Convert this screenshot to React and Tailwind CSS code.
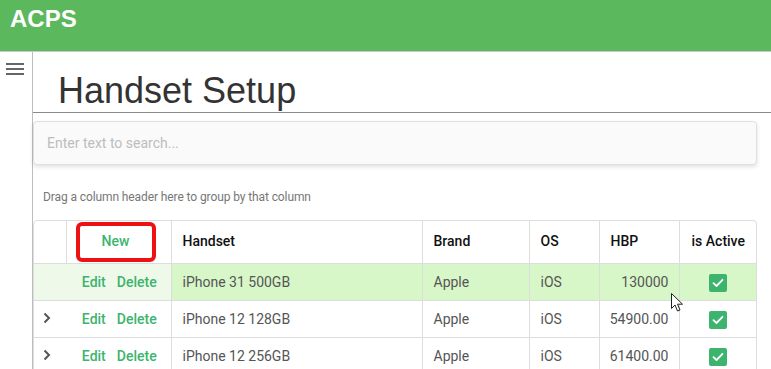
import React from "react";

const rows = [
  { name: "iPhone 31 500GB", brand: "Apple", os: "iOS", hbp: "130000", sel: true },
  { name: "iPhone 12 128GB", brand: "Apple", os: "iOS", hbp: "54900.00" },
  { name: "iPhone 12 256GB", brand: "Apple", os: "iOS", hbp: "61400.00" },
];

function Check() {
  return (
    <span className="inline-flex w-[18px] h-[18px] rounded-[2px] bg-[#3cb46e] items-center justify-center align-middle">
      <svg width="12" height="10" viewBox="0 0 12 10" fill="none">
        <path d="M1.5 5.2 L4.5 8 L10.5 1.8" stroke="white" strokeWidth="1.8" strokeLinecap="round" strokeLinejoin="round" />
      </svg>
    </span>
  );
}

function Chevron() {
  return (
    <svg width="8" height="12" viewBox="0 0 8 12" fill="none">
      <path d="M1.5 1.5 L6 6 L1.5 10.5" stroke="#555" strokeWidth="2" />
    </svg>
  );
}

export default function App() {
  return (
    <div className="w-[771px] h-[369px] overflow-hidden bg-white relative font-['Roboto',sans-serif]">
      <div className="h-[52px] bg-[#5cb85c] border-b border-[#c8c8c8] pl-[10px] pt-[4px]">
        <span className="text-white font-bold text-[24px] leading-[30px] font-['Liberation_Sans',Arial,sans-serif]">ACPS</span>
      </div>
      <div className="flex h-[317px]">
        <div className="w-[33px] shrink-0 border-r border-[#bdbdbd] pt-[11px] pl-[6px]">
          <div className="flex flex-col gap-[3px]">
            <div className="w-[18px] h-[2px] bg-[#666]" />
            <div className="w-[18px] h-[2px] bg-[#666]" />
            <div className="w-[18px] h-[2px] bg-[#666]" />
          </div>
        </div>
        <div className="flex-1 min-w-0">
          <div className="h-[61px] border-b border-[#8a8a8a] pl-[25px] pt-[19px]">
            <h1 className="text-[36px] leading-[40px] text-[#333] font-['Liberation_Sans',Arial,sans-serif]">Handset Setup</h1>
          </div>
          <div className="mr-[14px] mt-[8px] h-[44px] rounded-[4px] border border-[#e0e0e0] bg-[#fafafa] shadow-[0_2px_4px_rgba(0,0,0,0.12)] flex items-center pl-[13px]">
            <span className="text-[14px] text-[#bdbdbd]">Enter text to search...</span>
          </div>
          <div className="h-[55px] pl-[10px] pt-[25px] text-[12px] leading-[14px] text-[#777] tracking-[-0.1px]">
            Drag a column header here to group by that column
          </div>
          <div className="w-[724px] border border-[#ddd] rounded-[4px] overflow-hidden">
            <table className="table-fixed border-collapse w-full text-[14px]">
              <colgroup>
                <col className="w-[32px]" />
                <col className="w-[105px]" />
                <col className="w-[251px]" />
                <col className="w-[107px]" />
                <col className="w-[70px]" />
                <col className="w-[80px]" />
                <col className="w-[78px]" />
              </colgroup>
              <thead>
                <tr className="h-[42px] text-[#111] font-medium">
                  <th className="border-r border-b border-[#ddd]"></th>
                  <th className="border-r border-b border-[#ddd] p-0">
                    <div className="ml-[9px] w-[80px] h-[40px] rounded-[6px] border-[4px] border-[#ee1111] flex items-center justify-center text-[#3cb46e] font-medium">
                      New
                    </div>
                  </th>
                  <th className="border-r border-b border-[#ddd] text-left pl-[11px] font-medium">Handset</th>
                  <th className="border-r border-b border-[#ddd] text-left pl-[11px] font-medium">Brand</th>
                  <th className="border-r border-b border-[#ddd] text-left pl-[11px] font-medium">OS</th>
                  <th className="border-r border-b border-[#ddd] text-left pl-[11px] font-medium">HBP</th>
                  <th className="border-b border-[#ddd] text-center font-medium">is Active</th>
                </tr>
              </thead>
              <tbody>
                {rows.map((r, i) => (
                  <tr key={i} className="h-[37px] text-[#555]">
                    <td className={`border-b border-[#ddd] ${r.sel ? "bg-[#eff9ea]" : ""} pl-[9px] pt-[1px]`}>
                      {!r.sel && <span className="inline-flex pt-[4px]"><Chevron /></span>}
                    </td>
                    <td className={`border-r border-b border-[#ddd] ${r.sel ? "bg-[#eff9ea]" : ""} text-center font-medium text-[#3cb46e] pt-[1px]`}>
                      <span className="pl-[2px]">Edit</span>
                      <span className="ml-[11px]">Delete</span>
                    </td>
                    <td className={`border-r border-b border-[#ddd] ${r.sel ? "bg-[#d7f7c9]" : ""} pl-[11px] pt-[1px]`}>{r.name}</td>
                    <td className={`border-r border-b border-[#ddd] ${r.sel ? "bg-[#d7f7c9]" : ""} pl-[11px] pt-[1px]`}>{r.brand}</td>
                    <td className={`border-r border-b border-[#ddd] ${r.sel ? "bg-[#d7f7c9]" : ""} pl-[11px] pt-[1px]`}>{r.os}</td>
                    <td className={`border-r border-b border-[#ddd] ${r.sel ? "bg-[#d7f7c9]" : ""} text-right pr-[10px] pt-[1px]`}>{r.hbp}</td>
                    <td className={`border-b border-[#ddd] ${r.sel ? "bg-[#d7f7c9]" : ""} text-center pt-[1px]`}>
                      <Check />
                    </td>
                  </tr>
                ))}
              </tbody>
            </table>
          </div>
        </div>
      </div>
      <svg className="absolute left-[671px] top-[293px]" width="13" height="20" viewBox="0 0 13 20">
        <path d="M0.5 0.5 L0.5 15.5 L4 12 L6.5 18 L9 17 L6.5 11.2 L11.5 11.2 Z" fill="white" stroke="#222" strokeWidth="1" strokeLinejoin="round" />
      </svg>
    </div>
  );
}
